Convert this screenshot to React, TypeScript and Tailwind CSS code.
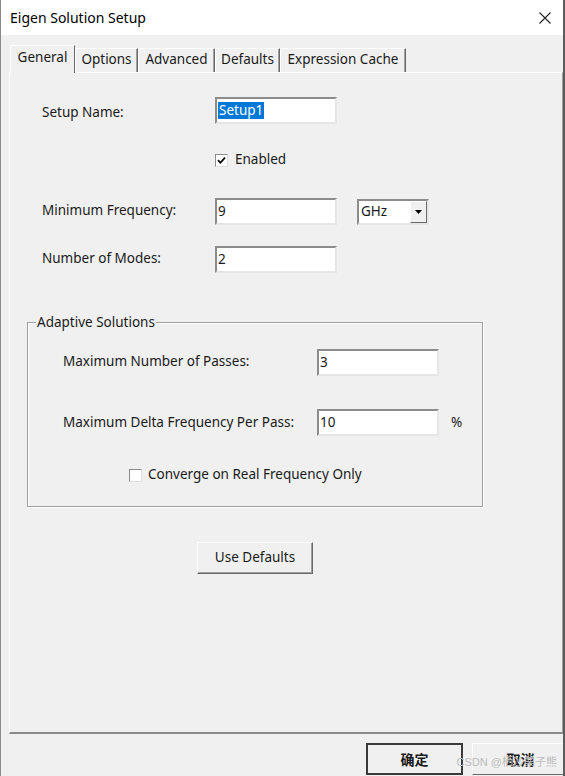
import type { ReactNode } from "react";

const sunken =
	"border-2 border-t-[#8c8c8c] border-l-[#8c8c8c] border-r-[#e6e6e6] border-b-[#e6e6e6] bg-white";

const TextBox = ({ value, w = "w-[122px]" }: { value: ReactNode; w?: string }) => (
	<div className={`${sunken} ${w} h-[27px] flex items-center pl-[1px] pb-[1px] leading-[17px]`}>
		{value}
	</div>
);

const CheckBox = ({ checked }: { checked: boolean }) => (
	<div className="w-[13px] h-[13px] border border-t-[#8c8c8c] border-l-[#8c8c8c] border-r-[#e0e0e0] border-b-[#e0e0e0] bg-white flex items-center justify-center">
		{checked && (
			<svg width="9" height="9" viewBox="0 0 9 9">
				<path d="M1 4.2 L3.4 6.8 L8 1.6" fill="none" stroke="#000" strokeWidth="1.7" />
			</svg>
		)}
	</div>
);

const tabs = [
	{ name: "Options", w: "w-[63px]" },
	{ name: "Advanced", w: "w-[77px]" },
	{ name: "Defaults", w: "w-[65px]" },
	{ name: "Expression Cache", w: "w-[126px]" },
];

export default function App() {
	return (
		<div className="w-[565px] h-[776px] bg-[#f0f0f0] border-l border-l-[#8a8a8a] border-r-2 border-r-[#5c5c5c] overflow-hidden relative font-['Noto_Sans','Noto_Sans_CJK_SC',sans-serif] text-[13.5px] text-[#1a1a1a]">
			{/* title bar */}
			<div className="h-[35px] bg-white flex items-center justify-between pl-[9px] pr-[12px]">
				<span className="text-[14px] text-black">Eigen Solution Setup</span>
				<svg width="12" height="12" viewBox="0 0 12 12">
					<path d="M0.5 0.5 L11.5 11.5 M11.5 0.5 L0.5 11.5" stroke="#222" strokeWidth="1.1" />
				</svg>
			</div>

			<div className="pl-[8px] pt-[10px]">
				{/* tabs */}
				<div className="flex items-end h-[27px]">
					<div className="relative z-10 ml-[1px] w-[65px] h-[28px] -mb-[1px] bg-[#f0f0f0] border-t border-l border-white border-r border-r-[#696969] rounded-tl-[2px] flex justify-center pt-[1px]">
						General
					</div>
					{tabs.map((t) => (
						<div
							key={t.name}
							className={`${t.w} h-[24px] pb-[2px] border-t border-l border-white border-r border-r-[#696969] shadow-[inset_-1px_0_0_#a0a0a0] flex justify-center items-center`}
						>
							{t.name}
						</div>
					))}
				</div>

				{/* panel */}
				<div className="h-[662px] border-t border-l border-white border-r border-r-[#a0a0a0] border-b-2 border-b-[#8a8a8a] pt-[24px]">
					<div className="flex items-center h-[27px] pl-[32px]">
						<span className="w-[173px] pt-[3px]">Setup Name:</span>
						<TextBox
							value={
								<span className="bg-[#0078d7] text-white px-[1px]">Setup1</span>
							}
						/>
					</div>
					<div className="flex items-center h-[20px] mt-[26px] pl-[205px] gap-[7px]">
						<CheckBox checked />
						<span className="pb-[2px]">Enabled</span>
					</div>
					<div className="flex items-center h-[27px] mt-[28px] pl-[32px]">
						<span className="w-[173px] pb-[2px]">Minimum Frequency:</span>
						<TextBox value="9" />
						<div className={`${sunken} ml-[20px] w-[72px] h-[26px] flex items-stretch`}>
							<span className="flex-1 flex items-center pl-[2px] pb-[1px]">GHz</span>
							<div className="w-[17px] bg-[#f0f0f0] border border-t-white border-l-white border-r-[#696969] border-b-[#696969] flex items-center justify-center">
								<svg width="7" height="4" viewBox="0 0 7 4">
									<path d="M0 0 H7 L3.5 4 Z" fill="#000" />
								</svg>
							</div>
						</div>
					</div>
					<div className="flex items-center h-[27px] mt-[21px] pl-[32px]">
						<span className="w-[173px] pb-[2px]">Number of Modes:</span>
						<TextBox value="2" />
					</div>

					{/* group box */}
					<fieldset className="mt-[39px] ml-[17px] w-[456px] border border-[#a0a0a0] shadow-[inset_1px_1px_0_#ffffff,1px_1px_0_#ffffff]">
						<legend className="ml-[8px] px-[1px] leading-[20px] pb-[1px] bg-[#f0f0f0]">
							Adaptive Solutions
						</legend>
						<div className="pt-[16px] pb-[21px]">
							<div className="flex items-center h-[27px] pl-[35px]">
								<span className="w-[254px] pb-[2px]">Maximum Number of Passes:</span>
								<TextBox value="3" />
							</div>
							<div className="flex items-center h-[27px] mt-[33px] pl-[35px]">
								<span className="w-[254px] pb-[1px]">Maximum Delta Frequency Per Pass:</span>
								<TextBox value="10" />
								<span className="ml-[12px] pb-[1px]">%</span>
							</div>
							<div className="flex items-center h-[20px] mt-[29px] pl-[101px] gap-[6px]">
								<CheckBox checked={false} />
								<span className="pb-[1px]">Converge on Real Frequency Only</span>
							</div>
						</div>
					</fieldset>

					<button className="mt-[35px] ml-[187px] w-[116px] h-[32px] pb-[1px] bg-[#f0f0f0] border border-t-white border-l-white border-r-[#696969] border-b-[#696969] shadow-[inset_-1px_-1px_0_#a0a0a0]">
						Use Defaults
					</button>
				</div>

				{/* footer */}
				<div className="flex gap-[9px] pt-[9px] pl-[357px] text-[14px] font-['Noto_Sans_CJK_SC',sans-serif] font-bold">
					<button className="w-[97px] h-[32px] shrink-0 bg-[#f0f0f0] border-2 border-[#3a3a3a]">
						确定
					</button>
					<button className="w-[97px] h-[32px] shrink-0 bg-[#f0f0f0] border border-t-white border-l-white border-r-[#696969] border-b-[#696969]">
						取消
					</button>
				</div>
			</div>

			<span className="absolute right-[6px] bottom-[6px] text-[11px] text-[#bdbdbd] font-['Liberation_Sans','Noto_Sans_CJK_SC',sans-serif] pointer-events-none">
				CSDN @栖沙栗子熊
			</span>
		</div>
	);
}
